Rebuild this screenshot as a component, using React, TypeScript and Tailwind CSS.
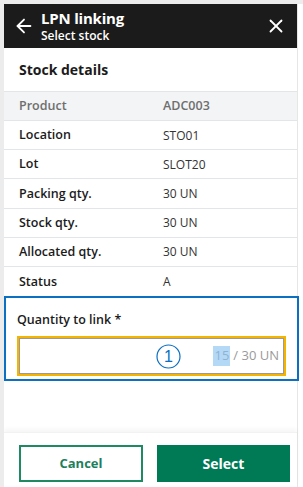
import { ArrowLeft, X } from "lucide-react";

const rows = [
    { label: "Location", value: "STO01" },
    { label: "Lot", value: "SLOT20" },
    { label: "Packing qty.", value: "30 UN" },
    { label: "Stock qty.", value: "30 UN" },
    { label: "Allocated qty.", value: "30 UN" },
    { label: "Status", value: "A" },
];

export default function App()
{
    return (
        <div className="w-[303px] h-[487px] bg-white border-l-4 border-t-4 border-[#ececec] overflow-hidden font-['Open_Sans',sans-serif]">
            <div className="w-[294px] h-full flex flex-col border-r border-[#e6e6e6]">
                {/* header */}
                <div className="h-[44px] bg-[#1b1b1b] flex items-center pl-[9px] pr-[10px] text-white">
                    <ArrowLeft className="size-[22px]" strokeWidth={2} />
                    <div className="ml-[6px] flex flex-col">
                        <span className="text-[15px] leading-[17px] font-bold tracking-[-0.2px]">LPN linking</span>
                        <span className="text-[12px] leading-[14px] font-semibold mt-[2px]">Select stock</span>
                    </div>
                    <X className="size-[22px] ml-auto" strokeWidth={2} />
                </div>

                {/* stock details */}
                <div className="h-[43px] flex items-center px-[15px]">
                    <h2 className="text-[14px] font-bold text-[#1b1b1b]">Stock details</h2>
                </div>
                <div className="border-t border-[#e3e6e8]">
                    <div className="h-[29px] flex items-center pt-[1px] px-[15px] bg-[#f2f4f5] border-b border-[#e3e6e8] text-[12.5px] font-semibold text-[#6e6e6e]">
                        <span className="w-[144px]">Product</span>
                        <span>ADC003</span>
                    </div>
                    {rows.map((r, i) => (
                        <div key={r.label} className={"h-[29.2px] flex items-center pt-[1px] px-[15px] text-[12.5px] " + (i < rows.length - 1 ? "border-b border-[#e3e6e8]" : "")}>
                            <span className="w-[144px] font-semibold text-[#1b1b1b]">{r.label}</span>
                            <span className="text-[#333] text-[12px]">{r.value}</span>
                        </div>
                    ))}
                </div>

                {/* quantity to link (focused) */}
                <div className="h-[85px] border-2 border-[#0b6fc2] px-[11px] pt-[13px] w-[295px]">
                    <div className="text-[12.5px] font-semibold text-[#1b1b1b]">Quantity to link *</div>
                    <div className="relative mt-[6px] h-[40px] border-2 border-[#f5b400]">
                        <div className="h-full border border-[#9a9a9a] flex items-center justify-end pr-[4px] text-[13px] text-[#9a9a9a]">
                            <span className="bg-[#b4d9f7] text-[#8fb3cf] px-[1px]">15</span>
                            <span className="ml-[3px]">/ 30 UN</span>
                        </div>
                        <svg className="absolute left-[137px] top-[6px]" width="25" height="25" viewBox="0 0 25 25">
                            <circle cx="12.5" cy="12.5" r="11.5" fill="none" stroke="#0b6fc2" strokeWidth="1.2" />
                            <text x="12.5" y="18" textAnchor="middle" fontSize="16" fill="#0b6fc2" fontFamily="Liberation Sans, sans-serif">1</text>
                        </svg>
                    </div>
                </div>

                <div className="flex-1" />

                {/* footer */}
                <div className="h-[55px] flex items-start gap-[14px] pl-[15px] pr-[7px] pt-[12px] bg-white shadow-[0_-3px_4px_rgba(0,0,0,0.04)] border-t border-[#f2f2f2]">
                    <button className="w-[124px] h-[37px] border-2 border-[#1d8a64] text-[#1d7f5c] text-[13px] font-bold">
                        Cancel
                    </button>
                    <button className="w-[133px] h-[37px] bg-[#007a55] text-white text-[14px] font-bold">
                        Select
                    </button>
                </div>
            </div>
        </div>
    );
}
